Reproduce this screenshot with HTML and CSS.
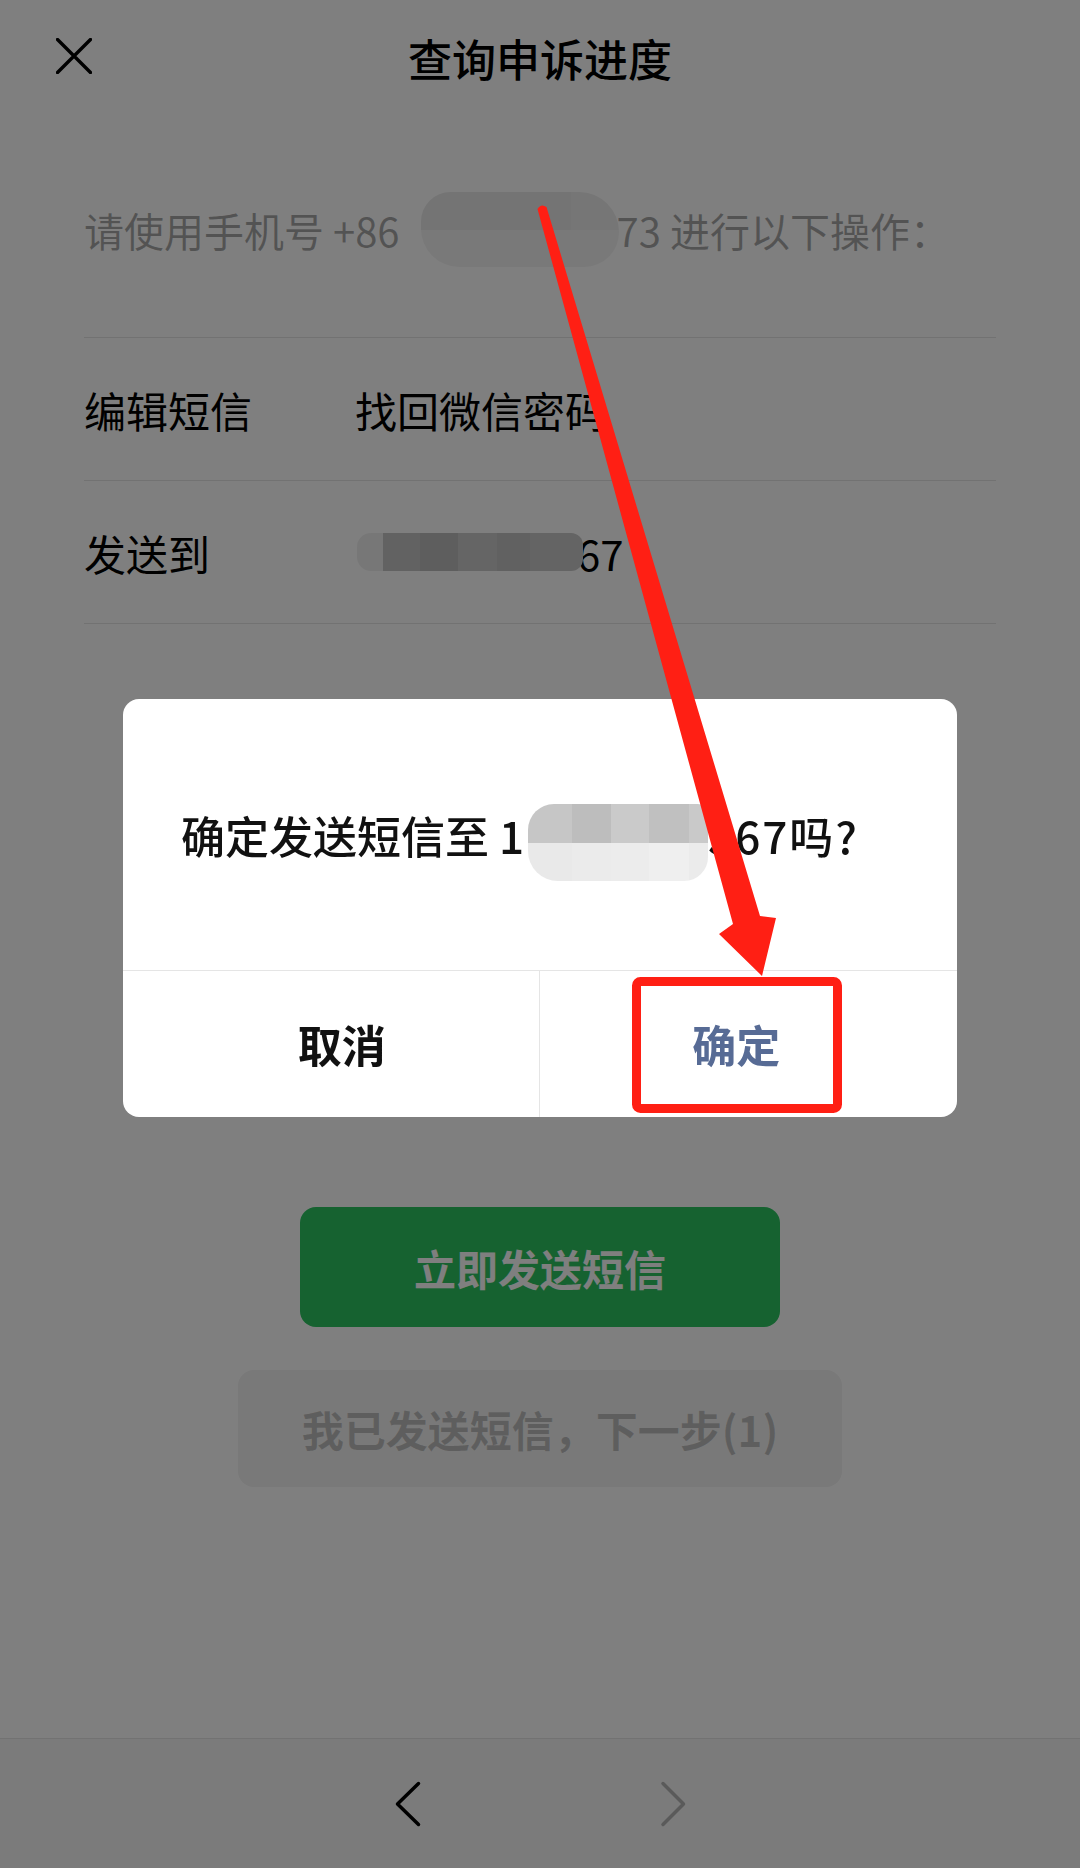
FILE: index.html
```html
<!DOCTYPE html>
<html>
<head>
	<meta charset="utf-8">
	<title>查询申诉进度</title>
	<link rel="stylesheet" href="styles.css">
</head>
<body>
<div class="page">
	<div class="nav">
		<a class="nav-close" href="javascript:void(0)">
			<svg width="36" height="36" viewBox="0 0 36 36"><path d="M1.5 1.5 L34.5 34.5 M34.5 1.5 L1.5 34.5" stroke="#000" stroke-width="3.4" stroke-linecap="round"/></svg>
		</a>
		<h1 class="nav-title">查询申诉进度</h1>
		<span></span>
	</div>

	<div class="main">
		<div class="hint">
			<span>请使用手机号 +86</span>
			<span class="redact redact-hint"></span>
			<span>73 进行以下操作：</span>
		</div>
		<ul class="rows">
			<li class="row">
				<span class="row-label">编辑短信</span>
				<span class="row-value">找回微信密码</span>
			</li>
			<li class="row">
				<span class="row-label">发送到</span>
				<span class="row-value"><span class="redact redact-row"></span><span>67</span></span>
			</li>
		</ul>
		<div class="actions">
			<a class="btn btn-primary" href="javascript:void(0)">立即发送短信</a>
			<a class="btn btn-default" href="javascript:void(0)">我已发送短信，下一步(1)</a>
		</div>
	</div>

	<div class="toolbar">
		<a href="javascript:void(0)">
			<svg width="60" height="60" viewBox="0 0 60 60"><path d="M40.5 9.5 L19.5 30 L40.5 50.5" fill="none" stroke="#000" stroke-width="3.5" stroke-linecap="round" stroke-linejoin="round"/></svg>
		</a>
		<a href="javascript:void(0)">
			<svg width="60" height="60" viewBox="0 0 60 60"><path d="M20 9.5 L40.5 30 L20 50.5" fill="none" stroke="#b4b4b4" stroke-width="3.5" stroke-linecap="round" stroke-linejoin="round"/></svg>
		</a>
	</div>
</div>

<div class="mask">
	<div class="dialog">
		<div class="dialog-body">
			<span>确定发送短信至 1</span>
			<span class="redact redact-dialog"></span>
			<span class="dialog-tail">367吗?</span>
		</div>
		<div class="dialog-foot">
			<a class="dialog-btn dialog-btn-cancel" href="javascript:void(0)">取消</a>
			<a class="dialog-btn dialog-btn-primary" href="javascript:void(0)">确定</a>
		</div>
	</div>
</div>

<!-- 标注 -->
<svg class="annotation" width="1080" height="1868" viewBox="0 0 1080 1868">
	<path d="M537.5 209 Q541 203 546.5 207 L760 916 L776 918 L762 976 L719 934 L733 924 Z" fill="#ff1f14"/>
	<rect x="636.5" y="981.5" width="201" height="127" rx="4" fill="none" stroke="#ff1f14" stroke-width="9"/>
</svg>
</body>
</html>
```

FILE: styles.css
```css
* {
	padding: 0px;
	margin: 0px;
	box-sizing: border-box;
}
li {
	list-style: none;
}
a {
	text-decoration: none;
	color: inherit;
}
body {
	position: relative;
	width: 1080px;
	height: 1868px;
	overflow: hidden;
	background: #fff;
	color: #000;
	font-family: "Noto Sans CJK SC", "Noto Sans", sans-serif;
}

.page {
	display: flex;
	flex-direction: column;
	height: 1868px;
}

/* 顶部导航 */
.nav {
	display: grid;
	grid-template-columns: 1fr auto 1fr;
	align-items: center;
	height: 116px;
}
.nav-close {
	display: flex;
	width: 36px;
	height: 36px;
	margin-left: 56px;
	margin-top: -4px;
}
.nav-title {
	font-size: 44px;
	font-weight: 500;
	line-height: 60px;
}

.main {
	position: relative;
	z-index: 0;
	flex: 1;
	padding: 0 84px;
}

.hint {
	display: flex;
	align-items: center;
	padding: 76px 0 70px;
	font-size: 40px;
	line-height: 56px;
	color: rgba(0, 0, 0, .35);
}

/* 打码 */
.redact {
	display: block;
	flex-shrink: 0;
	position: relative;
	z-index: 1;
}
.redact-hint {
	width: 198px;
	height: 75px;
	margin-left: 21px;
	margin-right: -2px;
	border-radius: 34px 46px 40px 44px;
	background:
		linear-gradient(to right, #e8e8e8 0 150px, #ececec 150px) top / 100% 38px no-repeat,
		#f3f3f3;
}
.redact-row {
	width: 226px;
	height: 38px;
	margin-left: 2px;
	margin-right: -6px;
	border-radius: 14px 12px 12px 14px;
	background: linear-gradient(to right, #efefef 0 26px, #c4c4c4 26px 63px, #bcbcbc 63px 101px, #cbcbcb 101px 140px, #c2c2c2 140px 173px, #c8c8c8 173px);
}
.redact-dialog {
	width: 180px;
	height: 77px;
	margin-left: 4px;
	margin-top: 16px;
	margin-right: 0;
	border-radius: 26px 10px 24px 30px;
	background:
		linear-gradient(to right, #c6c6c6 0 44px, #bdbdbd 44px 83px, #cacaca 83px 121px, #c0c0c0 121px 161px, #c9c9c9 161px) top / 100% 39px no-repeat,
		linear-gradient(to right, #e9e9e9 0 44px, #ebebeb 44px 83px, #ececec 83px 121px, #efefef 121px 161px, #ebebeb 161px);
}

/* 信息列表 */
.rows {
	border-top: 1px solid #e5e5e5;
}
.row {
	display: flex;
	align-items: center;
	height: 143px;
	border-bottom: 1px solid #e5e5e5;
	font-size: 42px;
}
.row-label {
	width: 271px;
}
.row-value {
	display: flex;
	align-items: center;
}

/* 按钮 */
.actions {
	display: flex;
	flex-direction: column;
	align-items: center;
	gap: 43px;
	margin-top: 583px;
}
.btn {
	display: flex;
	align-items: center;
	justify-content: center;
	border-radius: 16px;
	font-size: 42px;
	font-weight: 600;
}
.btn-primary {
	width: 480px;
	height: 120px;
	background: #2cc461;
	color: #fff;
}
.btn-default {
	width: 604px;
	height: 117px;
	background: #f2f2f2;
	color: rgba(0, 0, 0, .22);
}

/* 底部工具栏 */
.toolbar {
	display: flex;
	justify-content: center;
	align-items: center;
	gap: 205px;
	height: 130px;
	border-top: 1px solid #e5e5e5;
	background: #f7f7f7;
}
.toolbar a {
	display: flex;
}

/* 弹窗 */
.mask {
	position: fixed;
	top: 0;
	left: 0;
	right: 0;
	bottom: 0;
	display: flex;
	justify-content: center;
	align-items: flex-start;
	padding-top: 699px;
	background: rgba(0, 0, 0, .5);
}
.dialog {
	width: 834px;
	background: #fff;
	border-radius: 16px;
	overflow: hidden;
}
.dialog-body {
	display: flex;
	align-items: center;
	justify-content: center;
	height: 272px;
	padding-right: 40px;
	border-bottom: 1px solid #e5e5e5;
	font-size: 44px;
	font-weight: 500;
	color: #111;
}
.dialog-tail {
	letter-spacing: 2px;
}
.dialog-foot {
	display: flex;
	height: 146px;
}
.dialog-btn {
	flex: 1;
	display: flex;
	align-items: center;
	justify-content: center;
	font-size: 44px;
	font-weight: 600;
	color: #111;
}
.dialog-btn-cancel {
	padding-left: 22px;
}
.dialog-btn + .dialog-btn {
	border-left: 1px solid #e5e5e5;
}
.dialog-btn-primary {
	padding-right: 24px;
	color: #576b95;
}

.annotation {
	position: absolute;
	top: 0;
	left: 0;
	pointer-events: none;
}
```
